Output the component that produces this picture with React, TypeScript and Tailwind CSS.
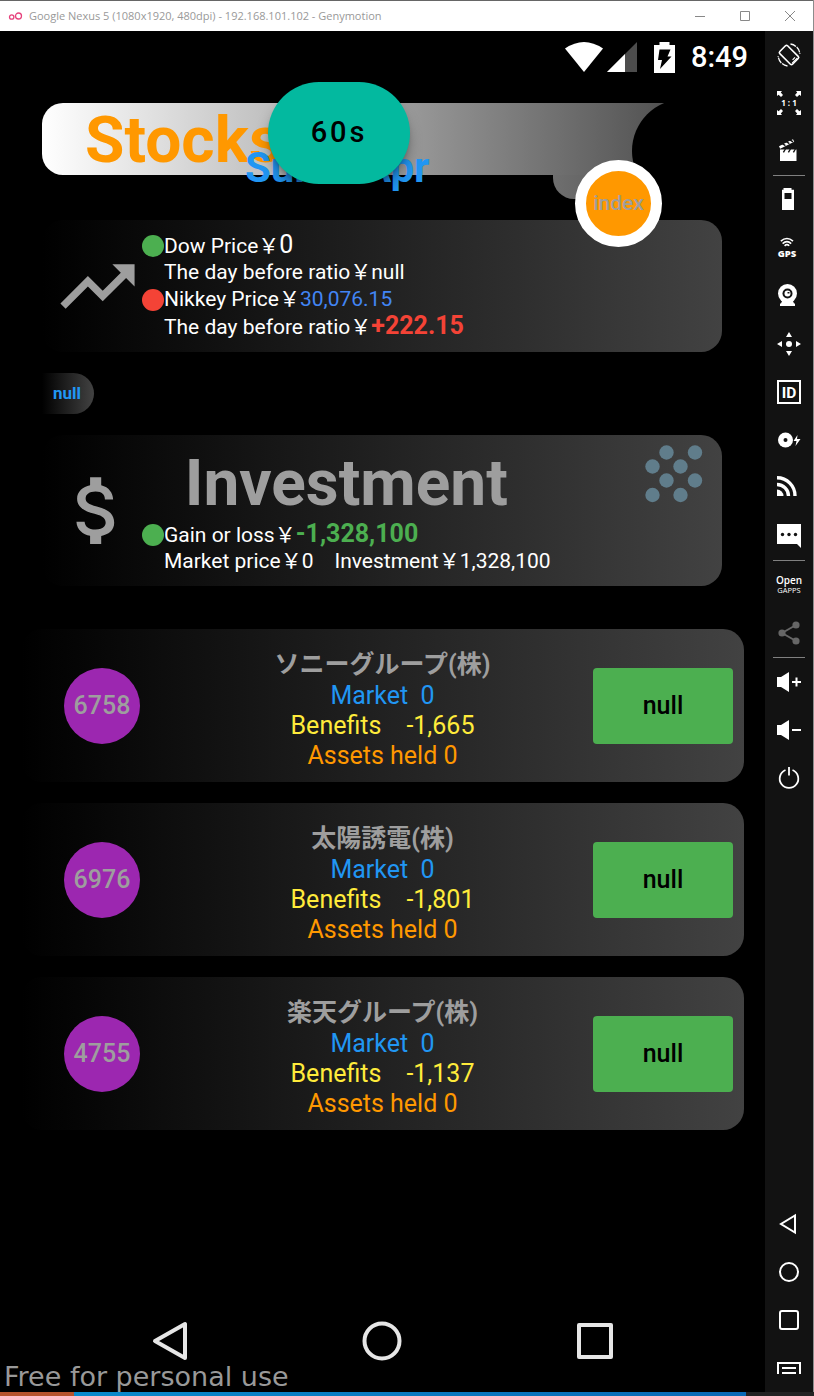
import type { ReactNode } from "react";

type Tool = { label: string; icon: ReactNode };

function Glyph({ children, className = "" }: { children: ReactNode; className?: string }) {
  return (
    <svg viewBox="0 0 24 24" className={`size-6 overflow-visible ${className}`} fill="currentColor" aria-hidden="true">
      {children}
    </svg>
  );
}

const captureTools: Tool[] = [
  {
    label: "Rotate",
    icon: (
      <Glyph>
        <g fill="none" stroke="currentColor" strokeWidth="1.6">
          <rect x="6.5" y="3" width="11" height="18" rx="1.5" transform="rotate(-45 12 12)" />
          <path d="M15.200 20.200l5-5M15.600 16.800l2.400-2.400" strokeWidth="1.200" />
          <path d="M13.500 1a11 11 0 0 1 9.400 10" strokeWidth="1.300" strokeDasharray="6 1" />
          <path d="M10.500 23a11 11 0 0 1-9.400-10" strokeWidth="1.300" strokeDasharray="6 1" />
        </g>
      </Glyph>
    ),
  },
  {
    label: "Pixel perfect",
    icon: (
      <Glyph>
        <path d="M0 0h5L3.800 1.600 6 4 4 6 1.600 3.800 0 5zM24 0v5l-1.600-1.200L20 6l-2-2 2.200-2.400L19 0zM0 24v-5l1.600 1.200L4 18l2 2-2.200 2.400L5 24zM24 24h-5l1.200-1.600L18 20l2-2 2.400 2.200L24 19z" />
        <text x="12" y="15" textAnchor="middle" fontSize="8" fontWeight="700" fontFamily="Open Sans, sans-serif">
          1 : 1
        </text>
      </Glyph>
    ),
  },
  {
    label: "Capture",
    icon: (
      <Glyph>
        <path d="M3 10.500h16.500V22H3z" />
        <path d="M2 7.200L16 .2l1.200 2.600L3.200 9.800z" />
        <path d="M5.400 4.600l3 2M9.400 2.600l3 2M13 .8l3 2M6.400 13.400l2-3.400M11.400 13.400l2-3.400M16.400 13.400l2-3.400" stroke="#121212" strokeWidth="1.400" />
      </Glyph>
    ),
  },
];

const deviceTools: Tool[] = [
  {
    label: "Battery",
    icon: (
      <Glyph>
        <path fillRule="evenodd" d="M6.500 0h8v1.800H17V22H5V1.800h1.500zM7.500 5v6h7V5z" />
      </Glyph>
    ),
  },
  {
    label: "GPS",
    icon: (
      <Glyph>
        <g fill="none" stroke="currentColor" strokeWidth="1.600">
          <path d="M3.800 5.200Q10-.2 16 5.200M5.600 7.600Q10 3.800 14.200 7.600M7.600 9.800Q10 7.600 12.200 9.800" />
        </g>
        <text x="10" y="20.500" textAnchor="middle" fontSize="9.500" fontWeight="800" fontFamily="Open Sans, sans-serif">
          GPS
        </text>
      </Glyph>
    ),
  },
  {
    label: "Camera",
    icon: (
      <Glyph>
        <path d="M5 17h11l1 2.500h1V22H3v-2.500h1z" />
        <circle cx="10.500" cy="9.500" r="9.500" />
        <circle cx="10.500" cy="9.500" r="5" fill="#121212" />
        <circle cx="10.500" cy="9.500" r="3" />
        <path d="M10.500 9.500V8h2v1.500z" fill="#121212" />
      </Glyph>
    ),
  },
  {
    label: "Remote control",
    icon: (
      <Glyph>
        <circle cx="12" cy="12" r="3" />
        <path d="M12 0l3 5H9zM12 24l3-5H9zM0 12l5-3v6zM24 12l-5-3v6z" />
      </Glyph>
    ),
  },
  {
    label: "Identifiers",
    icon: (
      <Glyph>
        <rect x="1" y="1" width="22" height="22" fill="none" stroke="currentColor" strokeWidth="2" />
        <text x="12" y="17.500" textAnchor="middle" fontSize="15.500" fontWeight="700" fontFamily="Roboto, sans-serif">
          ID
        </text>
      </Glyph>
    ),
  },
  {
    label: "Disk",
    icon: (
      <Glyph>
        <circle cx="8.500" cy="12" r="7.500" />
        <circle cx="8.500" cy="12" r="2" fill="#121212" />
        <path d="M20.500 7l-4 6h3l-1 5 5-7h-3.500z" />
      </Glyph>
    ),
  },
  {
    label: "Network",
    icon: (
      <Glyph>
        <g fill="none" stroke="currentColor" strokeWidth="3.400">
          <path d="M0 1.700A18 18 0 0 1 18 20M0 8.500A11.500 11.500 0 0 1 11.500 20" />
        </g>
        <path d="M0 13.500A6.500 6.500 0 0 1 6.500 20H0z" />
      </Glyph>
    ),
  },
  {
    label: "Messages",
    icon: (
      <Glyph>
        <path d="M0 0h24v24l-4-4H0z" />
        <circle cx="5.500" cy="10.500" r="1.700" fill="#121212" />
        <circle cx="12" cy="10.500" r="1.700" fill="#121212" />
        <circle cx="18.500" cy="10.500" r="1.700" fill="#121212" />
      </Glyph>
    ),
  },
];

const shareTools: Tool[] = [
  {
    label: "Open GApps",
    icon: (
      <Glyph>
        <text x="12" y="11" textAnchor="middle" fontSize="10" fontWeight="600" fontFamily="Open Sans, sans-serif">
          Open
        </text>
        <text x="12" y="20" textAnchor="middle" fontSize="7.500" fontWeight="500" fontFamily="Open Sans, sans-serif">
          GAPPS
        </text>
      </Glyph>
    ),
  },
  {
    label: "Share",
    icon: (
      <Glyph className="text-[#666666]">
        <path d="M5 12L19 4M5 12l14 8" stroke="currentColor" strokeWidth="2" />
        <circle cx="5" cy="12" r="3.600" />
        <circle cx="19" cy="4" r="3.600" />
        <circle cx="19" cy="20" r="3.600" />
      </Glyph>
    ),
  },
];

const powerTools: Tool[] = [
  {
    label: "Volume up",
    icon: (
      <Glyph>
        <path d="M0 7h4l8-5v20l-8-5H0zM18.500 7.500h2V11H24v2h-3.500v3.500h-2V13H15v-2h3.500z" />
      </Glyph>
    ),
  },
  {
    label: "Volume down",
    icon: (
      <Glyph>
        <path d="M0 7h4l8-5v20l-8-5H0zM15 11h9v2h-9z" />
      </Glyph>
    ),
  },
  {
    label: "Power",
    icon: (
      <Glyph>
        <path d="M15.500 4A9.300 9.300 0 1 1 8.500 4M12 1v8.500" fill="none" stroke="currentColor" strokeWidth="1.800" />
      </Glyph>
    ),
  },
];

const navigationTools: Tool[] = [
  {
    label: "Back",
    icon: (
      <Glyph>
        <path d="M18 3.500v17L4 12z" fill="none" stroke="currentColor" strokeWidth="2" />
      </Glyph>
    ),
  },
  {
    label: "Home",
    icon: (
      <Glyph>
        <circle cx="12" cy="12" r="9" fill="none" stroke="currentColor" strokeWidth="2" />
      </Glyph>
    ),
  },
  {
    label: "Recent",
    icon: (
      <Glyph>
        <rect x="3" y="3" width="18" height="18" rx="2" fill="none" stroke="currentColor" strokeWidth="2" />
      </Glyph>
    ),
  },
  {
    label: "Menu",
    icon: (
      <Glyph>
        <path d="M1 18V7h22v11M5 12h14M5 17h14" fill="none" stroke="currentColor" strokeWidth="2" />
      </Glyph>
    ),
  },
];

function ToolGroup({ tools }: { tools: Tool[] }) {
  return (
    <>
      {tools.map((tool) => (
        <button key={tool.label} type="button" aria-label={tool.label} className="flex size-12 items-center justify-center text-white">
          {tool.icon}
        </button>
      ))}
    </>
  );
}

function Divider() {
  return <div className="h-px w-8 bg-[#808080]" />;
}

function TitleBar() {
  return (
    <header className="flex h-[31px] items-center border-t border-[#666666] bg-white pl-2 font-['Open_Sans',sans-serif] text-[11px] text-[#999999]">
      <svg viewBox="0 0 15 10" className="mr-1.5 h-2.5 w-[15px]" fill="none" stroke="#e6437d" strokeWidth="1.300" aria-hidden="true">
        <circle cx="3.700" cy="6" r="2.200" />
        <circle cx="10.500" cy="5" r="3" />
      </svg>
      <h1>Google Nexus 5 (1080x1920, 480dpi) - 192.168.101.102 - Genymotion</h1>
      <div className="ml-auto flex">
        <button type="button" aria-label="Minimize" className="flex h-[30px] w-[45px] items-center justify-center">
          <svg viewBox="0 0 10 10" className="size-2.5" stroke="#888888" aria-hidden="true"><path d="M0 5.500h10" /></svg>
        </button>
        <button type="button" aria-label="Maximize" className="flex h-[30px] w-[45px] items-center justify-center">
          <svg viewBox="0 0 10 10" className="size-2.5" stroke="#888888" fill="none" aria-hidden="true"><path d="M.5.5h9v9h-9z" /></svg>
        </button>
        <button type="button" aria-label="Close" className="flex h-[30px] w-[46px] items-center justify-center">
          <svg viewBox="0 0 10 10" className="size-2.5" stroke="#888888" aria-hidden="true"><path d="M0 0l10 10M10 0L0 10" /></svg>
        </button>
      </div>
    </header>
  );
}

function StatusBar() {
  return (
    <div className="flex h-[52px] items-center justify-end pr-[17px] text-white">
      <svg viewBox="0 0 38 30" className="h-[30px] w-[38px]" fill="currentColor" aria-hidden="true">
        <path d="M0 6.500Q19-6.500 38 6.500L19 30z" />
      </svg>
      <svg viewBox="0 0 30 30" className="ml-1 h-[30px] w-[30px]" aria-hidden="true">
        <path d="M30 0v30H0z" fill="#4d4d4d" />
        <path d="M18 12v18H0z" fill="#ffffff" />
      </svg>
      <svg viewBox="0 0 21 31" className="ml-[17px] h-[31px] w-[21px]" aria-hidden="true">
        <path d="M5.500 0h10v3H21v28H0V3h5.500z" fill="#ffffff" />
        <path d="M5.500 7.500h11l-3 7h4L6 27l2-9H4z" fill="#000000" />
      </svg>
      <time className="ml-4 text-[29px] leading-8 font-medium">8:49</time>
    </div>
  );
}

function StocksHeader() {
  return (
    <section className="relative mt-5 mr-[43px] ml-[42px] h-[72px]">
      <div className="h-full rounded-l-[21px] bg-linear-to-r/srgb from-white to-[#424242] pl-[43px]">
        <h2 className="text-[64px] leading-[76px] font-bold text-[#ff9800]">Stocks</h2>
      </div>
      <div className="absolute top-full right-[57px] h-6 w-[112px] rounded-b-[21px] bg-linear-to-r/srgb from-[#6f6f6f] to-[#505050]" />
      <div className="absolute -top-1 right-0 h-[104px] w-[90px] rounded-l-full bg-black" />
      <p className="absolute top-[41px] left-[203px] text-[42px] leading-[48px] font-bold whitespace-nowrap text-[#2196f3]">Sun 4 Apr</p>
      <button type="button" className="absolute -top-[21px] left-[226px] h-[102px] w-[142px] rounded-full bg-[#03b99f] text-[29px] font-medium tracking-widest text-black shadow-lg shadow-black/40">
        60s
      </button>
      <button type="button" className="absolute top-[57px] right-[60px] size-[87px] rounded-full border-[11px] border-white bg-[#ff9800] text-[21px] font-medium text-[#9e9e9e]">
        index
      </button>
    </section>
  );
}

function Line({ dot, children }: { dot?: string; children: ReactNode }) {
  return (
    <div className="flex h-[27px] items-center">
      <span className={`size-[22px] shrink-0 rounded-full ${dot ?? ""}`} />
      <p className="whitespace-pre">{children}</p>
    </div>
  );
}

function IndexCard() {
  return (
    <section className="mt-[45px] mr-[43px] ml-[42px] flex items-center rounded-[21px] bg-linear-to-r/srgb from-black to-[#424242] py-3 pl-[11px] text-[21px] leading-[27px] text-white">
      <svg viewBox="0 0 24 24" className="size-[89px] shrink-0 text-[#9e9e9e]" fill="currentColor" aria-hidden="true">
        <path d="M16 6l2.290 2.290-4.880 4.880-4-4L2 16.590 3.410 18l6-6 4 4 6.300-6.290L22 12V6z" />
      </svg>
      <div>
        <Line dot="bg-[#4caf50]">Dow Price￥<span className="text-[25px]">0</span></Line>
        <Line>The day before ratio￥null</Line>
        <Line dot="bg-[#f44336]">Nikkey Price￥<span className="text-[#4285f4]">30,076.15</span></Line>
        <Line>The day before ratio￥<b className="text-[25px] text-[#f44336]">+222.15</b></Line>
      </div>
    </section>
  );
}

const bubbles = [
  [21.500, 7.500], [50, 7.500], [7.500, 21.500], [35.500, 21.500],
  [21.500, 35.500], [50, 35.500], [7.500, 50], [35.500, 50],
];

function InvestmentCard() {
  return (
    <section className="mt-[21px] mr-[43px] ml-[42px] flex items-center rounded-[21px] bg-linear-to-r/srgb from-black to-[#424242] pt-[11px] pb-[11px] pl-[11px] text-[21px] leading-[27px] text-white">
      <svg viewBox="0 0 24 24" className="size-[89px] shrink-0 text-[#9e9e9e]" fill="currentColor" aria-hidden="true">
        <path d="M11.800 10.900c-2.270-.59-3-1.200-3-2.150 0-1.090 1.010-1.850 2.700-1.850 1.780 0 2.440.85 2.500 2.100h2.210c-.07-1.720-1.120-3.300-3.210-3.810V3h-3v2.160c-1.940.42-3.500 1.680-3.500 3.610 0 2.310 1.910 3.460 4.700 4.130 2.500.6 3 1.480 3 2.410 0 .69-.49 1.790-2.700 1.790-2.060 0-2.870-.92-2.980-2.100h-2.200c.12 2.190 1.760 3.420 3.680 3.830V21h3v-2.150c1.950-.37 3.500-1.500 3.500-3.550 0-2.840-2.430-3.810-4.700-4.400z" />
      </svg>
      <div>
        <h2 className="text-center text-[64px] leading-[75px] font-bold text-[#9e9e9e]">Investment</h2>
        <Line dot="bg-[#4caf50]">Gain or loss￥<b className="text-[25px] text-[#4caf50]">-1,328,100</b></Line>
        <Line>Market price￥0{"\u3000"}Investment￥1,328,100</Line>
      </div>
      <svg viewBox="-1 1 58 58" className="mr-5 ml-auto size-[58px] self-start overflow-visible" fill="#607d8b" aria-hidden="true">
        {bubbles.map(([x, y]) => (
          <circle key={`${x}-${y}`} cx={x} cy={y} r="7.200" />
        ))}
      </svg>
    </section>
  );
}

const holdings = [
  { code: "6758", name: "ソニーグループ(株)", benefits: "-1,665" },
  { code: "6976", name: "太陽誘電(株)", benefits: "-1,801" },
  { code: "4755", name: "楽天グループ(株)", benefits: "-1,137" },
];

function Holdings() {
  return (
    <ul className="mt-[43px] mr-[21px] ml-[21px] flex flex-col gap-[21px] text-[25px]">
      {holdings.map((item) => (
        <li key={item.code} className="flex items-center rounded-[21px] bg-linear-to-r/srgb from-black to-[#424242] py-[11px] pr-[11px] pl-[43px]">
          <span className="flex size-[76px] items-center justify-center rounded-full bg-[#9c27b0] font-medium text-[#9e9e9e]">{item.code}</span>
          <div className="ml-8 flex-1 text-center leading-[30px] whitespace-pre">
            <h3 className="h-[41px] pt-2.5 font-bold text-[#9e9e9e]">{item.name}</h3>
            <p className="text-[#2196f3]">{"Market  0"}</p>
            <p className="text-[#ffeb3b]">Benefits{"\u3000"}{item.benefits}</p>
            <p className="text-[#ff9800]">Assets held 0</p>
          </div>
          <button type="button" className="h-[76px] w-[140px] rounded-sm bg-[#4caf50] font-medium text-black">null</button>
        </li>
      ))}
    </ul>
  );
}

function AndroidNav() {
  return (
    <footer className="mt-auto text-[#e6e6e6]">
      <nav className="flex justify-around px-16">
        <button type="button" aria-label="Back">
          <svg viewBox="0 0 40 40" className="size-10" fill="none" stroke="currentColor" strokeWidth="4" strokeLinejoin="round" aria-hidden="true"><path d="M35 3v34L5 20z" /></svg>
        </button>
        <button type="button" aria-label="Home">
          <svg viewBox="0 0 40 40" className="size-10" fill="none" stroke="currentColor" strokeWidth="4" aria-hidden="true"><circle cx="20" cy="20" r="17.500" /></svg>
        </button>
        <button type="button" aria-label="Recent apps">
          <svg viewBox="0 0 40 40" className="size-10" fill="none" stroke="currentColor" strokeWidth="4" strokeLinejoin="round" aria-hidden="true"><path d="M4 4h32v32H4z" /></svg>
        </button>
      </nav>
      <p className="pl-1 font-['DejaVu_Sans',sans-serif] text-[27px] leading-[31px] text-[#999999]">Free for personal use</p>
    </footer>
  );
}

export default function App() {
  return (
    <div className="flex min-h-screen flex-col bg-black font-[Roboto,'Noto_Sans_CJK_JP',sans-serif]">
      <div className="flex flex-1 flex-col border-r border-[#8c8c8c]">
        <TitleBar />
        <div className="flex flex-1">
          <main className="flex min-w-0 flex-1 flex-col">
            <StatusBar />
            <StocksHeader />
            <IndexCard />
            <p className="mt-[21px] ml-[42px] h-[41px] w-[52px] rounded-r-[21px] bg-linear-to-r/srgb from-black to-[#424242] pl-[11px] text-[17px] leading-[41px] font-bold text-[#2196f3]">null</p>
            <InvestmentCard />
            <Holdings />
            <AndroidNav />
          </main>
          <aside className="flex w-12 flex-col items-center bg-[#121212]">
            <ToolGroup tools={captureTools} />
            <Divider />
            <ToolGroup tools={deviceTools} />
            <Divider />
            <ToolGroup tools={shareTools} />
            <Divider />
            <ToolGroup tools={powerTools} />
            <div className="mt-auto">
              <ToolGroup tools={navigationTools} />
            </div>
          </aside>
        </div>
      </div>
      <div className="flex h-1 bg-[#222222]">
        <div className="w-[74px] bg-[#b5532c]" />
        <div className="mr-[68px] flex-1 bg-linear-to-r from-[#0a8acb] to-[#0868b5]" />
      </div>
    </div>
  );
}
